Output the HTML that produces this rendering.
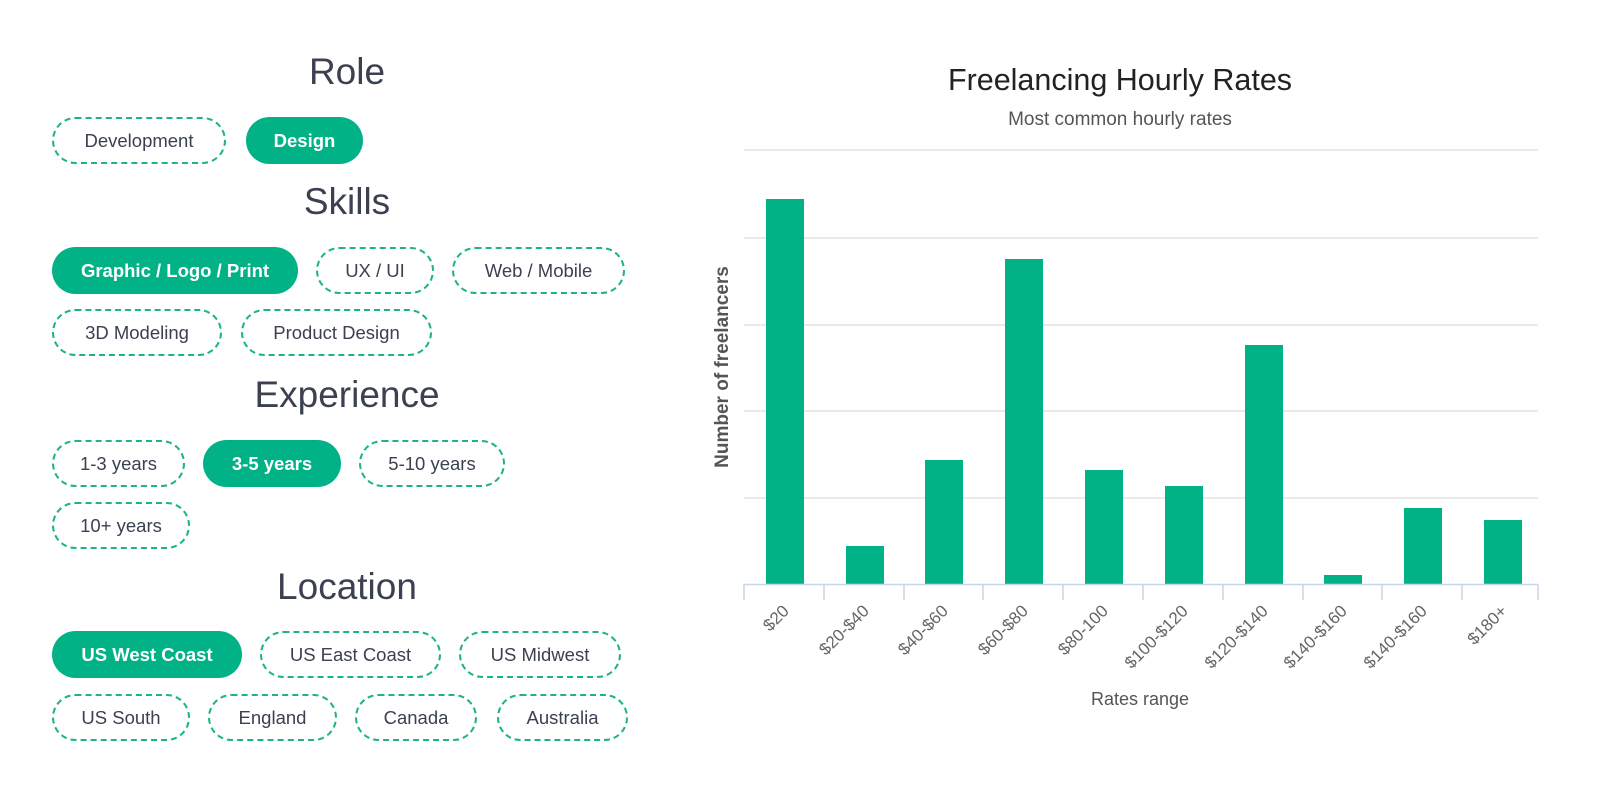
<!DOCTYPE html>
<html><head><meta charset="utf-8"><style>
html,body{margin:0;padding:0;background:#fff;width:1600px;height:803px;overflow:hidden;font-family:"Liberation Sans",sans-serif}
.t{position:absolute;left:0;width:694px;text-align:center;font-size:37px;color:#3b4150;line-height:1}
.c{position:absolute;box-sizing:border-box;height:47px;border:2px dashed #1db385;border-radius:24px;display:flex;align-items:center;justify-content:center;font-size:18.5px;color:#3b4150}
.c.on{background:#02b287;border:none;color:#fff;font-weight:bold}
</style></head><body>
<div class="t" style="top:53px">Role</div>
<div class="t" style="top:183px">Skills</div>
<div class="t" style="top:376px">Experience</div>
<div class="t" style="top:568px">Location</div>

<div class="c" style="left:52px;top:117px;width:174px">Development</div>
<div class="c on" style="left:246px;top:117px;width:117px">Design</div>

<div class="c on" style="left:52px;top:247px;width:246px">Graphic / Logo / Print</div>
<div class="c" style="left:316px;top:247px;width:118px">UX / UI</div>
<div class="c" style="left:452px;top:247px;width:173px">Web / Mobile</div>
<div class="c" style="left:52px;top:309px;width:170px">3D Modeling</div>
<div class="c" style="left:241px;top:309px;width:191px">Product Design</div>

<div class="c" style="left:52px;top:440px;width:133px">1-3 years</div>
<div class="c on" style="left:203px;top:440px;width:138px">3-5 years</div>
<div class="c" style="left:359px;top:440px;width:146px">5-10 years</div>
<div class="c" style="left:52px;top:502px;width:138px">10+ years</div>

<div class="c on" style="left:52px;top:631px;width:190px">US West Coast</div>
<div class="c" style="left:260px;top:631px;width:181px">US East Coast</div>
<div class="c" style="left:459px;top:631px;width:162px">US Midwest</div>
<div class="c" style="left:52px;top:694px;width:138px">US South</div>
<div class="c" style="left:208px;top:694px;width:129px">England</div>
<div class="c" style="left:355px;top:694px;width:122px">Canada</div>
<div class="c" style="left:497px;top:694px;width:131px">Australia</div>

<svg style="position:absolute;left:0;top:0" width="1600" height="803" font-family="Liberation Sans, sans-serif">
<text x="1120" y="90" text-anchor="middle" font-size="30.5" fill="#222">Freelancing Hourly Rates</text>
<text x="1120" y="125" text-anchor="middle" font-size="19" fill="#555">Most common hourly rates</text>
<g stroke="#e3e3e3" stroke-width="1.5">
<line x1="744" x2="1538" y1="150" y2="150"/><line x1="744" x2="1538" y1="238" y2="238"/>
<line x1="744" x2="1538" y1="325" y2="325"/><line x1="744" x2="1538" y1="411" y2="411"/>
<line x1="744" x2="1538" y1="498" y2="498"/></g>
<g fill="#02b287">
<rect x="766" y="199" width="38" height="385"/>
<rect x="846" y="546" width="38" height="38"/>
<rect x="925" y="460" width="38" height="124"/>
<rect x="1005" y="259" width="38" height="325"/>
<rect x="1085" y="470" width="38" height="114"/>
<rect x="1165" y="486" width="38" height="98"/>
<rect x="1245" y="345" width="38" height="239"/>
<rect x="1324" y="575" width="38" height="9"/>
<rect x="1404" y="508" width="38" height="76"/>
<rect x="1484" y="520" width="38" height="64"/>
</g>
<g stroke="#c8d4e8" stroke-width="1.5">
<line x1="744" x2="1538" y1="584.5" y2="584.5"/>
<line x1="744" x2="744" y1="584" y2="600"/><line x1="824" x2="824" y1="584" y2="600"/>
<line x1="904" x2="904" y1="584" y2="600"/><line x1="983" x2="983" y1="584" y2="600"/>
<line x1="1063" x2="1063" y1="584" y2="600"/><line x1="1143" x2="1143" y1="584" y2="600"/>
<line x1="1223" x2="1223" y1="584" y2="600"/><line x1="1303" x2="1303" y1="584" y2="600"/>
<line x1="1382" x2="1382" y1="584" y2="600"/><line x1="1462" x2="1462" y1="584" y2="600"/>
<line x1="1538" x2="1538" y1="584" y2="600"/></g>
<g font-size="17" fill="#666" text-anchor="end">
<text transform="translate(790,612) rotate(-45)">$20</text>
<text transform="translate(870,612) rotate(-45)">$20-$40</text>
<text transform="translate(949,612) rotate(-45)">$40-$60</text>
<text transform="translate(1029,612) rotate(-45)">$60-$80</text>
<text transform="translate(1109,612) rotate(-45)">$80-100</text>
<text transform="translate(1189,612) rotate(-45)">$100-$120</text>
<text transform="translate(1269,612) rotate(-45)">$120-$140</text>
<text transform="translate(1348,612) rotate(-45)">$140-$160</text>
<text transform="translate(1428,612) rotate(-45)">$140-$160</text>
<text transform="translate(1508,612) rotate(-45)">$180+</text>
</g>
<text x="1140" y="705" text-anchor="middle" font-size="18" fill="#555">Rates range</text>
<text transform="translate(728,367) rotate(-90)" text-anchor="middle" font-size="19" font-weight="bold" fill="#555">Number of freelancers</text>
</svg>
</body></html>
